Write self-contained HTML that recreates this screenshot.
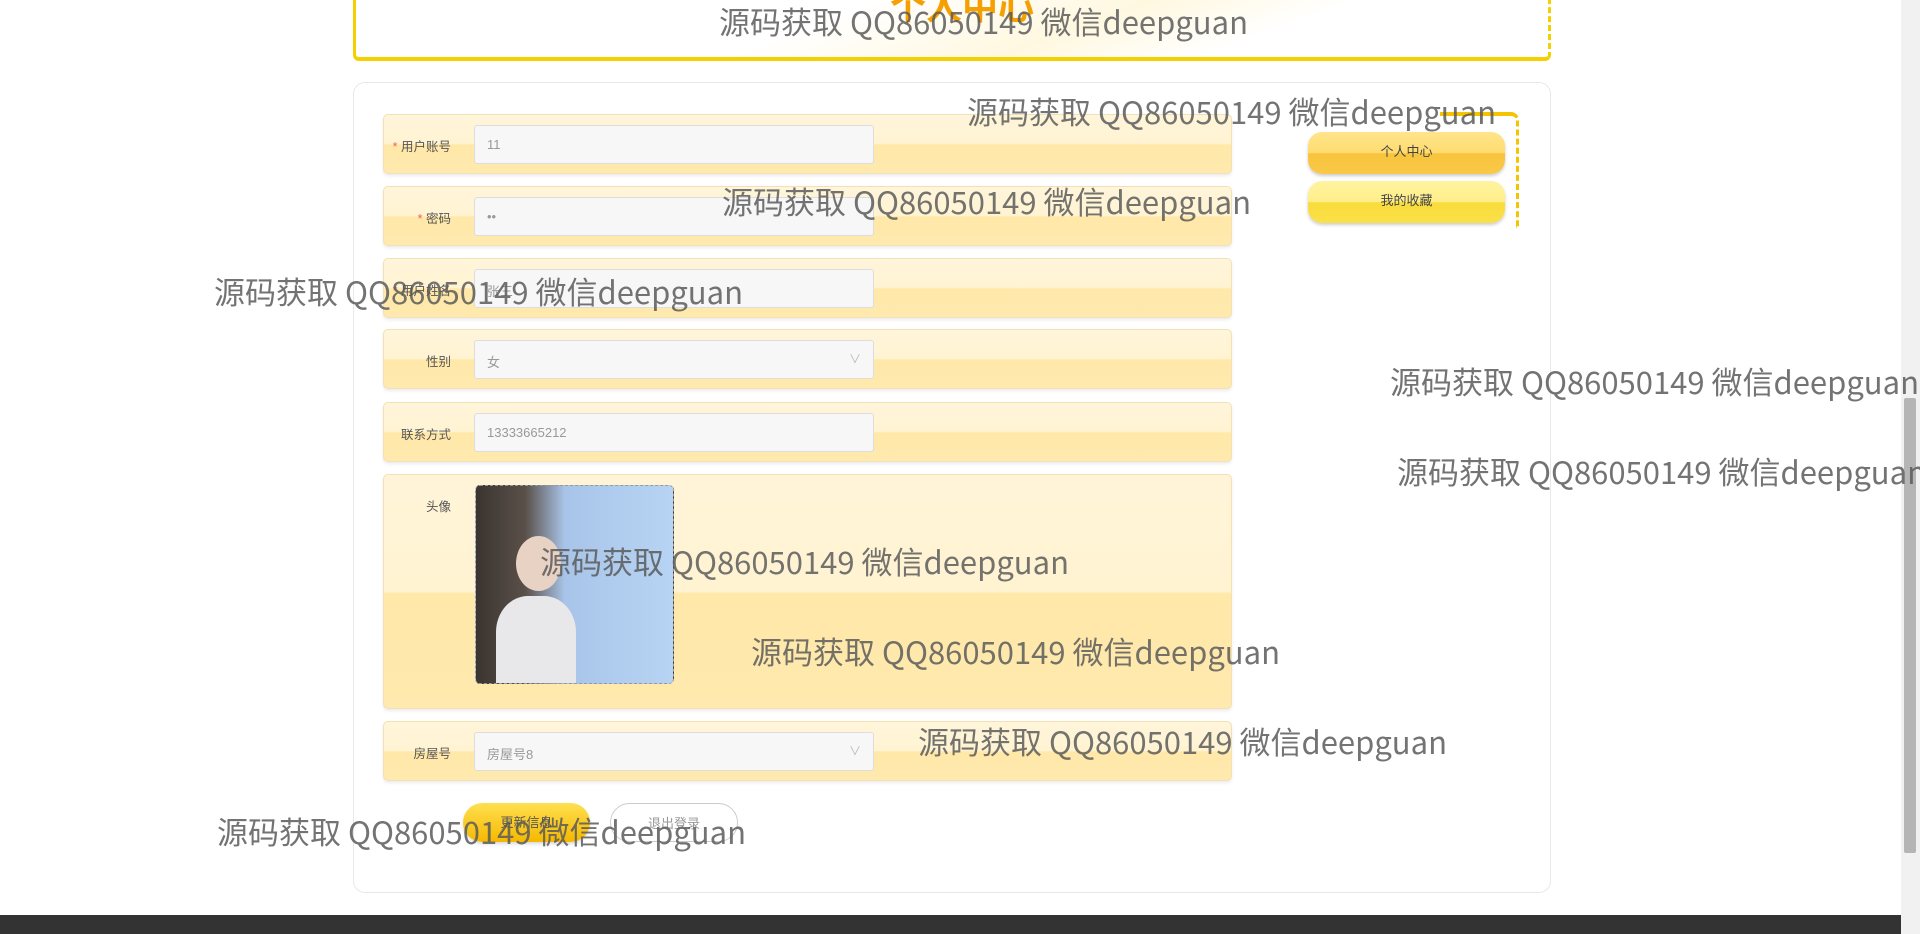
<!DOCTYPE html>
<html><head><meta charset="utf-8"><style>
*{box-sizing:border-box;margin:0;padding:0}
body{width:1920px;height:934px;overflow:hidden;background:#fff;position:relative;font-family:"Liberation Sans","Noto Sans CJK SC",sans-serif;}
.top{position:absolute;left:353px;top:-10px;width:1198px;height:71px;border-left:3px solid #f5d000;border-bottom:4px solid #f5d000;border-right:3px dashed #f5d000;border-radius:0 0 6px 6px;background:linear-gradient(160deg,#fff 40%,#fff8e0 60%,#fff 75%);}
.title{position:absolute;left:890px;top:-22px;font-size:36px;font-weight:bold;color:#f5a000;}
.card{position:absolute;left:353px;top:82px;width:1198px;height:811px;border:1px solid #e8e8e8;border-radius:12px;}
.row{position:absolute;left:383px;width:849px;height:60px;border:1px solid #f3e0b5;border-radius:5px;background:linear-gradient(#fff5da 0%,#fff3d2 50%,#ffe8a8 51%,#ffe9ae 100%);box-shadow:0 2px 3px rgba(0,0,0,.08);}
.lab{position:absolute;right:780px;top:21px;font-size:12.5px;color:#555;white-space:nowrap}
.lab b{color:#e66;font-weight:normal}
.inp{position:absolute;left:90px;top:10px;width:400px;height:39px;background:#f7f7f7;border:1px solid #ddd;border-radius:3px;font-size:13px;color:#999;padding:11px 12px}
.inp i{position:absolute;right:12px;top:9px;font-style:normal;color:#bbb;font-size:12px}
.nav{position:absolute;left:1308px;width:197px;height:42px;border-radius:14px;font-size:13px;color:#444;text-align:center;line-height:40px;box-shadow:0 2px 3px rgba(0,0,0,.2)}
.wm{position:absolute;font-size:31px;color:rgba(90,90,90,.85);white-space:nowrap;font-family:"Noto Sans CJK SC",sans-serif;line-height:36px;transform:translateY(-18px)}
.btn{position:absolute;top:803px;height:39px;border-radius:20px;font-size:13px;text-align:center;line-height:39px}
</style></head><body>
<div class="top"></div>
<div class="title">个人中心</div>
<div class="card"></div>

<div class="row" style="top:114px"><div class="lab"><b>* </b>用户账号</div><div class="inp">11</div></div>
<div class="row" style="top:186px"><div class="lab"><b>* </b>密码</div><div class="inp">••</div></div>
<div class="row" style="top:258px"><div class="lab"><b>* </b>用户姓名</div><div class="inp">张三</div></div>
<div class="row" style="top:329px"><div class="lab">性别</div><div class="inp">女<i>∨</i></div></div>
<div class="row" style="top:402px"><div class="lab">联系方式</div><div class="inp">13333665212</div></div>
<div class="row" style="top:474px;height:235px;background:linear-gradient(#fff4d8 0%,#fff3d2 50%,#ffe8a8 51%,#ffe9ae 100%)"><div class="lab">头像</div>
<div style="position:absolute;left:91px;top:10px;width:199px;height:199px;border:1px dashed #999;border-radius:5px;overflow:hidden;background:linear-gradient(90deg,#3a3430 0%,#5a504a 25%,#a8c4e8 45%,#b8d4f4 100%)">
<div style="position:absolute;left:40px;top:50px;width:45px;height:55px;border-radius:50%;background:#e8d2c4"></div>
<div style="position:absolute;left:20px;top:110px;width:80px;height:90px;border-radius:40% 40% 0 0;background:#e8e8ea"></div>
</div></div>
<div class="row" style="top:721px"><div class="lab">房屋号</div><div class="inp">房屋号8<i>∨</i></div></div>

<div class="btn" style="left:463px;width:127px;background:linear-gradient(#ffe050,#f5b800);color:#555;box-shadow:0 2px 3px rgba(0,0,0,.15)">更新信息</div>
<div class="btn" style="left:610px;width:128px;background:#fff;border:1px solid #ccc;color:#999">退出登录</div>

<div class="nav" style="top:132px;background:linear-gradient(#ffe48a 0%,#ffdc70 50%,#f8c43c 51%,#f9c848 100%)">个人中心</div>
<div class="nav" style="top:181px;background:linear-gradient(#fff3a0 0%,#ffee8a 50%,#f9dc3c 51%,#fae048 100%)">我的收藏</div>
<div style="position:absolute;left:1440px;top:112px;width:79px;height:116px;border-top:4px solid #f5c400;border-right:3px dashed #f5c400;border-radius:0 8px 0 0"></div>

<div style="position:absolute;left:0;top:915px;width:1901px;height:19px;background:#333"></div>
<div style="position:absolute;left:1901px;top:0;width:19px;height:934px;background:#f1f1f1"></div>
<div style="position:absolute;left:1904px;top:398px;width:12px;height:455px;background:#b5b5b5;border-radius:2px"></div>

<div class="wm" style="left:719px;top:21px">源码获取 QQ86050149 微信deepguan</div>
<div class="wm" style="left:967px;top:111px">源码获取 QQ86050149 微信deepguan</div>
<div class="wm" style="left:722px;top:201px">源码获取 QQ86050149 微信deepguan</div>
<div class="wm" style="left:214px;top:291px">源码获取 QQ86050149 微信deepguan</div>
<div class="wm" style="left:1390px;top:381px">源码获取 QQ86050149 微信deepguan</div>
<div class="wm" style="left:1397px;top:471px">源码获取 QQ86050149 微信deepguan</div>
<div class="wm" style="left:540px;top:561px">源码获取 QQ86050149 微信deepguan</div>
<div class="wm" style="left:751px;top:651px">源码获取 QQ86050149 微信deepguan</div>
<div class="wm" style="left:918px;top:741px">源码获取 QQ86050149 微信deepguan</div>
<div class="wm" style="left:217px;top:831px">源码获取 QQ86050149 微信deepguan</div>
</body></html>
